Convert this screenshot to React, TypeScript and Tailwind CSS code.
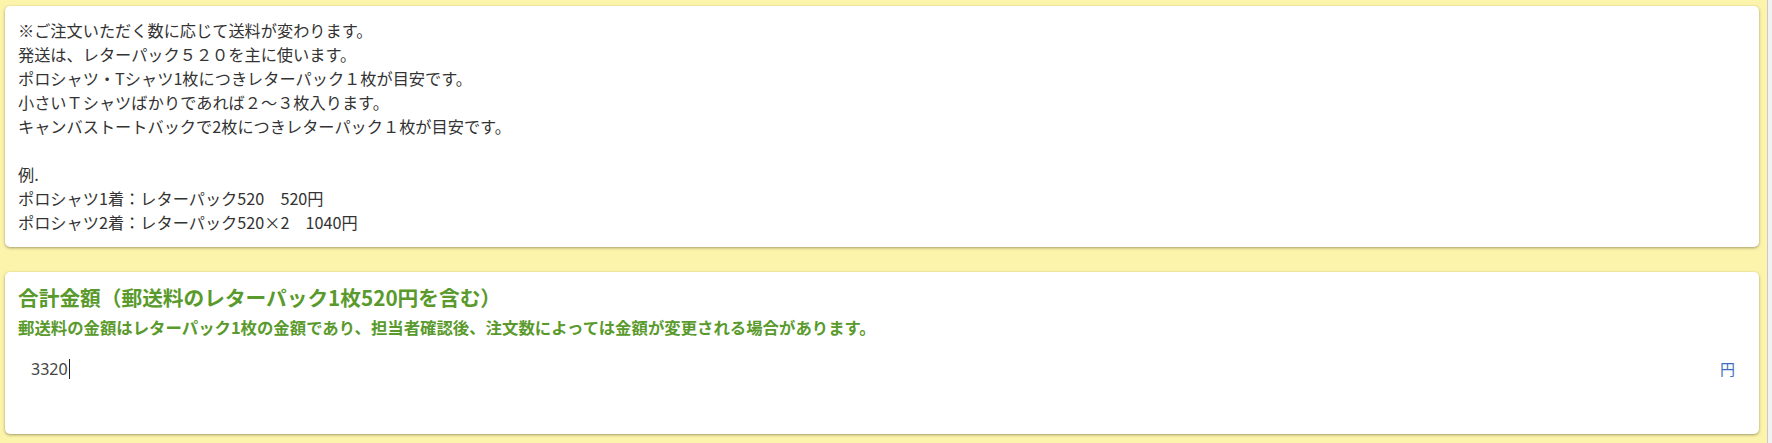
import React from 'react';

const notes = [
  '※ご注文いただく数に応じて送料が変わります。',
  '発送は、レターパック５２０を主に使います。',
  'ポロシャツ・Tシャツ1枚につきレターパック１枚が目安です。',
  '小さいＴシャツばかりであれば２～３枚入ります。',
  'キャンバストートバックで2枚につきレターパック１枚が目安です。',
  '',
  '例.',
  'ポロシャツ1着：レターパック520　520円',
  'ポロシャツ2着：レターパック520×2　1040円',
];

const jp = { fontFamily: '"Noto Sans CJK JP", "Noto Sans", sans-serif' };

export default function App() {
  return (
    <div className="flex h-[443px] w-full bg-[#fcf4ab]" style={jp}>
      <div className="flex min-w-0 flex-1 flex-col gap-[25px] pl-[5px] pr-[8px] pt-[6px]">
        <section className="rounded-[5px] bg-white px-[13px] pb-[13px] pt-[12px] shadow-[0_1px_3px_rgba(90,80,40,0.55)]">
          <div className="text-[16.2px] leading-[24px] text-[#333]">
            {notes.map((line, i) => (
              <p key={i} className="h-[24px] whitespace-pre">
                {line}
              </p>
            ))}
          </div>
        </section>

        <section className="h-[162px] rounded-[5px] bg-white px-[13px] pt-[10px] shadow-[0_1px_3px_rgba(90,80,40,0.55)]">
          <h2 className="text-[20.7px] font-bold leading-[30px] text-[#5a9a2c]">
            合計金額（郵送料のレターパック1枚520円を含む）
          </h2>
          <p className="mt-[3px] text-[16.4px] font-bold leading-[24px] text-[#5a9a2c]">
            郵送料の金額はレターパック1枚の金額であり、担当者確認後、注文数によっては金額が変更される場合があります。
          </p>
          <div className="mt-[10px] flex h-[40px] items-center pl-[13px] pr-[11px]">
            <div className="flex flex-1 items-center text-[16px] text-[#444]" style={{ fontFamily: '"Noto Sans", sans-serif' }}>
              3320
              <span className="ml-[1px] h-[20px] w-px bg-[#222]" />
            </div>
            <span className="text-[15px] text-[#3a6fc0]">円</span>
          </div>
        </section>
      </div>
      <div className="w-[5px] border-l border-[#c9c9c9] bg-[#f2f2f2]" />
    </div>
  );
}
